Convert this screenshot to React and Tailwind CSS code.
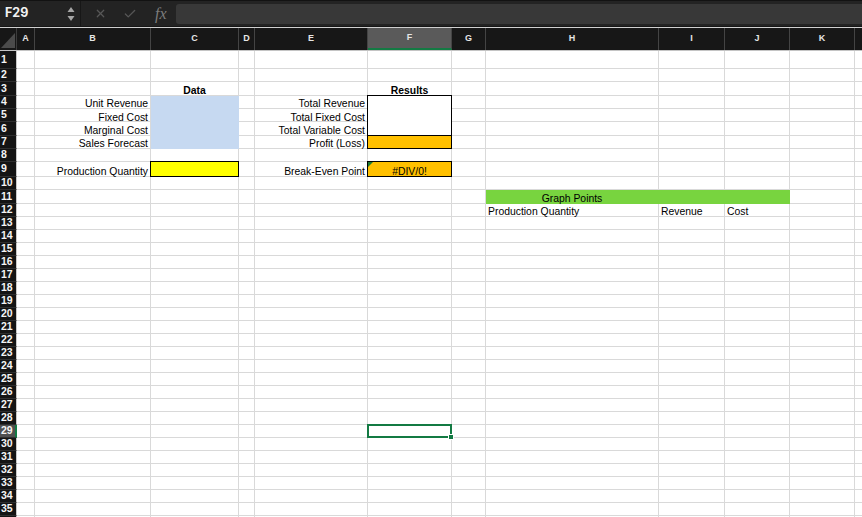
import { X, Check } from 'lucide-react';

const COLS = [
  { k: 'A', w: 'w-[18px]' },
  { k: 'B', w: 'w-[116px]' },
  { k: 'C', w: 'w-[88px]' },
  { k: 'D', w: 'w-[16px]' },
  { k: 'E', w: 'w-[113px]' },
  { k: 'F', w: 'w-[84px]' },
  { k: 'G', w: 'w-[34px]' },
  { k: 'H', w: 'w-[173px]' },
  { k: 'I', w: 'w-[66px]' },
  { k: 'J', w: 'w-[65px]' },
  { k: 'K', w: 'w-[65px]' },
  { k: 'L', w: 'w-[40px]' },
];

const rowHeight = (r) => {
  if (r === 1) return 'h-[18px]';
  if (r === 9) return 'h-[14.67px]';
  if (r <= 12) return 'h-[13.33px]';
  return 'h-[13px]';
};

const blue = 'bg-[#c6d9f1] border-[#c6d9f1]';
const orange = 'bg-[#ffc000] border-[#ffc000]';
const green = 'bg-[#78d43f] border-[#78d43f]';

const CELLS = {
  C3: { text: 'Data', align: 'center', bold: true },
  F3: { text: 'Results', align: 'center', bold: true },
  B4: { text: 'Unit Revenue', align: 'right' },
  B5: { text: 'Fixed Cost', align: 'right' },
  B6: { text: 'Marginal Cost', align: 'right' },
  B7: { text: 'Sales Forecast', align: 'right' },
  C4: { fill: blue },
  C5: { fill: blue },
  C6: { fill: blue },
  C7: { fill: blue },
  E4: { text: 'Total Revenue', align: 'right' },
  E5: { text: 'Total Fixed Cost', align: 'right' },
  E6: { text: 'Total Variable Cost', align: 'right' },
  E7: { text: 'Profit (Loss)', align: 'right' },
  F4: { fill: 'border-white', box: 'border-t border-l border-r' },
  F5: { fill: 'border-white', box: 'border-l border-r' },
  F6: { fill: 'border-white', box: 'border-l border-r' },
  F7: { fill: orange, box: 'border' },
  B9: { text: 'Production Quantity', align: 'right' },
  C9: { fill: 'bg-[#ffff00] border-[#ffff00]', box: 'border' },
  E9: { text: 'Break-Even Point', align: 'right' },
  F9: { fill: orange, box: 'border', text: '#DIV/0!', align: 'center', flag: true },
  H11: { fill: green, text: 'Graph Points', align: 'center' },
  I11: { fill: green },
  J11: { fill: green },
  H12: { text: 'Production Quantity', align: 'left' },
  I12: { text: 'Revenue', align: 'left' },
  J12: { text: 'Cost', align: 'left' },
};

function Cell({ col, row }) {
  const id = col.k + row;
  const c = CELLS[id] || {};
  const selected = id === 'F29';
  const align =
    c.align === 'right' ? 'justify-end pr-[2px]' : c.align === 'center' ? 'justify-center' : 'justify-start pl-[2px]';
  return (
    <div
      className={`relative shrink-0 h-full border-r border-b flex items-center ${col.w} ${c.fill || 'border-[#d9d9d9]'} ${align}`}
    >
      {c.box && <div className={`absolute -inset-px z-10 border-black ${c.box}`} />}
      {c.flag && (
        <div className="absolute left-0 top-0 z-20 w-0 h-0 border-t-[5px] border-t-[#1f7a32] border-r-[5px] border-r-transparent" />
      )}
      {c.text && (
        <span className={`relative z-20 whitespace-nowrap translate-y-[1.5px] leading-[13px] text-[10.4px] text-black ${c.bold ? 'font-bold' : ''}`}>
          {c.text}
        </span>
      )}
      {selected && (
        <div className="absolute -inset-px z-30 border-2 border-[#137a43]">
          <div className="absolute -right-[4px] -bottom-[4px] w-[6px] h-[6px] bg-[#137a43] border border-white" />
        </div>
      )}
    </div>
  );
}

function Toolbar() {
  return (
    <div className="h-[27px] bg-[#232323] border-t border-[#121212] border-b border-b-[#161616] flex items-center">
      <div className="w-[81px] h-full flex items-center justify-between pl-[5px] pr-[5px] border-r border-[#171717]">
        <span className="text-[12.5px] font-bold text-[#f2f2f2] font-['Inter',sans-serif]">F29</span>
        <svg width="8" height="16" viewBox="0 0 8 16">
          <path d="M4 1 L7.5 6 L0.5 6 Z" fill="#a6a6a6" />
          <path d="M4 15 L7.5 10 L0.5 10 Z" fill="#a6a6a6" />
        </svg>
      </div>
      <X size={13} strokeWidth={2.2} className="ml-[13px] text-[#575757]" />
      <Check size={14} strokeWidth={2.2} className="ml-[16px] text-[#575757]" />
      <span className="ml-[18px] text-[16px] italic text-[#7c7c7c] font-['Liberation_Serif',serif] leading-none">fx</span>
      <div className="ml-[9px] flex-1 h-[20px] bg-[#383838] rounded-l-[3px]" />
    </div>
  );
}

function Header() {
  return (
    <div className="flex h-[24px] bg-[#171717] border-t border-[#cfcfcf] border-b border-b-[#c4c4c4]">
      <div className="w-[17px] shrink-0 h-full border-r border-[#3c3c3c] flex items-end justify-end pb-[2px] pr-px">
        <svg width="14" height="15" viewBox="0 0 14 15">
          <path d="M14 0 L14 15 L0 15 Z" fill="#4b4b4b" />
        </svg>
      </div>
      {COLS.map((col) => (
        <div
          key={col.k}
          className={`shrink-0 h-full border-r border-[#444] flex items-center justify-center text-[9px] font-semibold text-[#e6e6e6] ${col.w} ${
            col.k === 'F' ? 'bg-[#5a5a5a] border-b-2 border-b-[#137a43]' : ''
          }`}
        >
          {col.k === 'L' ? '' : col.k}
        </div>
      ))}
    </div>
  );
}

export default function App() {
  const rows = Array.from({ length: 36 }, (_, i) => i + 1);
  return (
    <div className="w-[862px] h-[517px] overflow-hidden bg-white font-['Liberation_Sans',Arial,sans-serif]">
      <Toolbar />
      <Header />
      {rows.map((r) => (
        <div key={r} className={`flex ${rowHeight(r)}`}>
          <div
            className={`w-[17px] shrink-0 h-full border-b border-[#2e2e2e] flex items-center pl-px text-[10.5px] font-semibold text-[#f4f4f4] ${
              r === 29 ? 'bg-[#505050] border-r-2 border-r-[#137a43]' : 'bg-[#141414] border-r border-r-[#c9c9c9]'
            }`}
          >
            {r < 36 ? r : ''}
          </div>
          {COLS.map((col) => (
            <Cell key={col.k} col={col} row={r} />
          ))}
        </div>
      ))}
    </div>
  );
}
